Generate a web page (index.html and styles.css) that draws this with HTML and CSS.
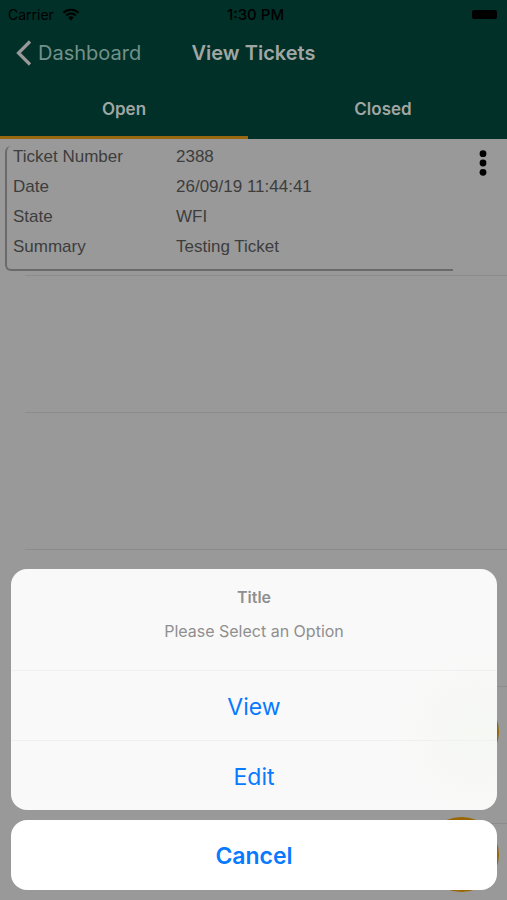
FILE: index.html
```html
<!DOCTYPE html>
<html lang="en">
<head>
<meta charset="utf-8">
<meta name="viewport" content="width=device-width, initial-scale=1">
<title>View Tickets</title>
<link rel="stylesheet" href="styles.css">
</head>
<body>
<div class="screen">
  <header class="header">
    <div class="status">
      <div class="carrier">
        <span>Carrier</span>
        <svg class="wifi" viewBox="0 0 18 13" aria-hidden="true">
          <path d="M1.500 4.800a10.800 10.800 0 0 1 15 0M4.200 7.500a7 7 0 0 1 9.600 0" fill="none" stroke="currentColor" stroke-width="2"/>
          <path d="M6.200 9.600a4 4 0 0 1 5.600 0L9 12.500z" fill="currentColor"/>
        </svg>
      </div>
      <span class="time">1:30 PM</span>
      <span class="battery"></span>
    </div>
    <nav class="navbar">
      <a class="back" href="#dashboard">
        <svg class="chevron" viewBox="0 0 16 26" aria-hidden="true"><path d="M14 1.500L2.500 13L14 24.500" fill="none" stroke="currentColor" stroke-width="3.200"/></svg>
        <span>Dashboard</span>
      </a>
      <h1 class="title">View Tickets</h1>
    </nav>
    <div class="tabs" role="tablist">
      <button class="tab tab-active" role="tab" aria-selected="true">Open</button>
      <button class="tab" role="tab" aria-selected="false">Closed</button>
    </div>
  </header>
  <main class="list">
    <article class="row">
      <dl class="ticket">
        <dt>Ticket Number</dt><dd>2388</dd>
        <dt>Date</dt><dd>26/09/19 11:44:41</dd>
        <dt>State</dt><dd>WFI</dd>
        <dt>Summary</dt><dd>Testing Ticket</dd>
      </dl>
      <button class="more" aria-label="More options">
        <svg viewBox="0 0 8 26" aria-hidden="true"><circle cx="4" cy="3.700" r="3.400"/><circle cx="4" cy="13" r="3.400"/><circle cx="4" cy="22.300" r="3.400"/></svg>
      </button>
    </article>
    <div class="row"></div>
    <div class="row"></div>
    <div class="row"></div>
    <div class="row"></div>
    <div class="row"></div>
  </main>
  <div class="fabs">
    <span class="fab"></span>
    <span class="fab"></span>
  </div>
  <section class="sheet" role="dialog" aria-labelledby="sheet-title">
    <div class="options">
      <div class="message">
        <h2 id="sheet-title">Title</h2>
        <p>Please Select an Option</p>
      </div>
      <button class="option">View</button>
      <button class="option">Edit</button>
    </div>
    <button class="option cancel">Cancel</button>
  </section>
</div>
</body>
</html>
```
FILE: styles.css
```css
* { box-sizing: border-box; }

body {
  margin: 0;
  background: #999;
  font-family: Inter, "Liberation Sans", sans-serif;
}

button {
  border: 0;
  padding: 0;
  background: none;
  font: inherit;
  color: inherit;
}

h1, h2, p, dl, dd { margin: 0; }

.screen {
  position: relative;
  height: 100vh;
  overflow: hidden;
}

.header {
  background: #003027;
  color: #a0a6a4;
}

.status {
  display: grid;
  grid-template-columns: 1fr auto 1fr;
  align-items: center;
  height: 28px;
  padding: 0 8px;
  color: #000;
  font-size: 14px;
}

.carrier {
  display: flex;
  align-items: center;
  gap: 8px;
}

.wifi {
  width: 18px;
  height: 13px;
}

.time {
  padding-left: 4px;
  font-size: 15px;
  font-weight: 500;
}

.battery {
  justify-self: end;
  width: 25px;
  height: 9px;
  margin-right: 2px;
  border-radius: 2px;
  background: #000;
}

.navbar {
  display: grid;
  grid-template-columns: 1fr auto 1fr;
  align-items: center;
  height: 50px;
  padding: 0 16px;
}

.back {
  display: flex;
  align-items: center;
  gap: 6px;
  color: #73918a;
  font-size: 20px;
  text-decoration: none;
}

.chevron {
  width: 16px;
  height: 26px;
  color: #999;
}

.title {
  font-size: 20px;
  font-weight: 600;
}

.tabs {
  display: grid;
  grid-template-columns: 1fr 1fr;
  gap: 11px;
  height: 61px;
}

.tab {
  padding-top: 4px;
  border-bottom: 3px solid transparent;
  font-size: 17px;
  font-weight: 600;
}

.tab-active { border-bottom-color: #996710; }

.row {
  position: relative;
  display: flex;
  justify-content: space-between;
  align-items: flex-start;
  height: 137px;
  padding: 7px 20px 5px 5px;
}

.row::after {
  content: "";
  position: absolute;
  right: 0;
  bottom: 0;
  left: 25px;
  height: 1px;
  background: #8c8c8c;
}

.ticket {
  flex: 0 0 448px;
  display: grid;
  grid-template-columns: 163px 1fr;
  row-gap: 10px;
  align-content: start;
  height: 125px;
  padding: 1px 0 0 6px;
  border-bottom: 2px solid #6a6a6a;
  border-left: 2px solid #6a6a6a;
  border-radius: 6px 0 0 6px;
  color: #3d3d3d;
  font: 17px/20px "Liberation Sans", sans-serif;
}

.more {
  width: 8px;
  padding-top: 4px;
}

.more svg {
  display: block;
  width: 8px;
  height: 26px;
}

.fabs {
  position: absolute;
  right: 8px;
  bottom: 8px;
  display: grid;
  gap: 48px;
}

.fab {
  width: 75px;
  height: 75px;
  border-radius: 50%;
  background: #996600;
}

.sheet {
  position: absolute;
  right: 10px;
  bottom: 10px;
  left: 11px;
  display: grid;
  gap: 10px;
}

.options {
  overflow: hidden;
  border-radius: 16px;
  background: radial-gradient(circle at 96% 68%, #f6f8f4, #f9f9f9 90px);
}

.message {
  display: grid;
  gap: 14px;
  height: 101px;
  padding: 18px 16px 0;
  align-content: start;
  color: #8f8f8f;
  text-align: center;
  font-size: 16px;
  line-height: 20px;
}

.message h2 {
  font-size: 16px;
  font-weight: 600;
}

.option {
  display: block;
  width: 100%;
  height: 70px;
  padding-top: 2px;
  border-top: 1px solid #f0f0f0;
  color: #087aff;
  font-size: 23px;
}

.cancel {
  border-top: 0;
  border-radius: 16px;
  background: #fff;
  font-weight: 600;
}
```
